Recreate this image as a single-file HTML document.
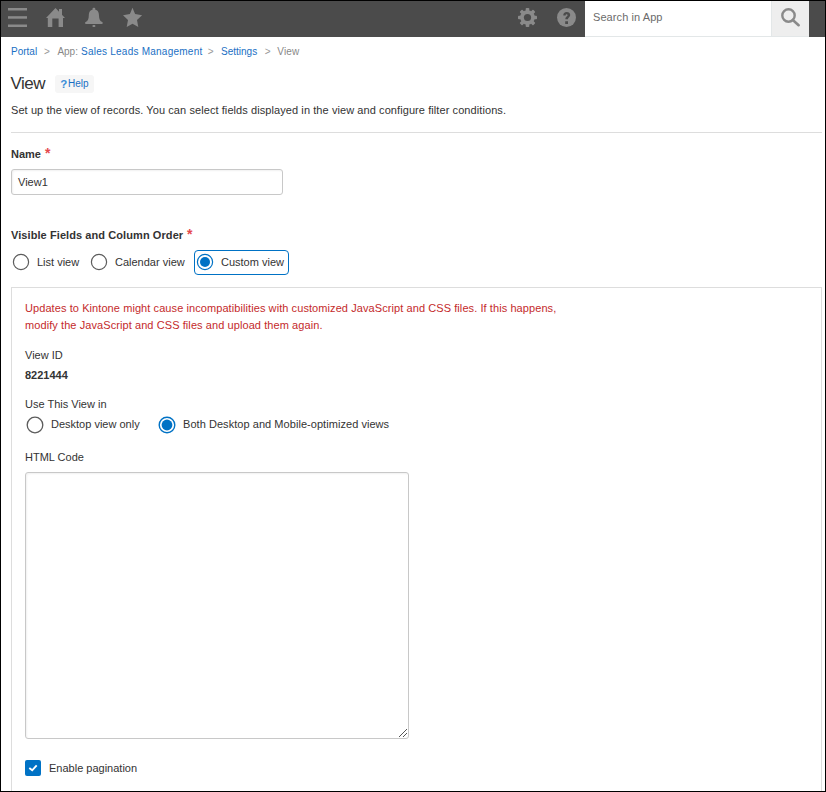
<!DOCTYPE html>
<html><head><meta charset="utf-8">
<style>
html,body{margin:0;padding:0;}
body{width:826px;height:792px;position:relative;overflow:hidden;background:#fff;font-family:"Liberation Sans",sans-serif;color:#333;}
.frame{position:absolute;left:0;top:0;width:826px;height:792px;box-sizing:border-box;border:1px solid #000;pointer-events:none;z-index:50;}
.a{position:absolute;white-space:nowrap;}
.hdr{position:absolute;left:0;top:0;width:826px;height:37px;background:#4b4b4b;}
.ic{position:absolute;}
.search{position:absolute;left:585px;top:0;width:186px;height:36px;background:#fff;border-bottom:1px solid #e3e7e8;}
.sbtn{position:absolute;left:771px;top:0;width:37px;height:36px;background:#eeeeee;border-bottom:1px solid #e3e7e8;border-left:1px solid #e3e7e8;}
.t11{font-size:11px;line-height:13px;}
.bc{font-size:10px;line-height:12px;color:#888;}
.bc .l{color:#1a6fc4;}
.req{color:#e5484d;}
.radio{position:absolute;width:17px;height:17px;box-sizing:border-box;border:1.3px solid #666;border-radius:50%;background:#fff;}
.radio.on{border-color:#0072c5;}
.radio.on:after{content:"";position:absolute;left:1.85px;top:1.85px;width:11px;height:11px;border-radius:50%;background:#0072c5;}
</style></head><body>
<div class="hdr"></div>
<!-- hamburger -->
<svg class="ic" style="left:8px;top:8px" width="19" height="19" viewBox="0 0 19 19"><g fill="#8a8a8a"><rect x="0" y="0" width="19" height="2.5"/><rect x="0" y="8.2" width="19" height="2.5"/><rect x="0" y="16.5" width="19" height="2.5"/></g></svg>
<!-- home -->
<svg class="ic" style="left:46px;top:8px" width="19" height="19" viewBox="0 0 19 19"><path fill="#8a8a8a" d="M9.5 0 L19 10 L17 10 L17 19 L12.6 19 L12.6 10.4 L6.3 10.4 L6.3 19 L1.8 19 L1.8 10 L0 10 Z M13 1 L16 1 L16 7 L13 7 Z"/></svg>
<!-- bell -->
<svg class="ic" style="left:84px;top:7px" width="20" height="21" viewBox="0 -1 20 21"><g fill="#8a8a8a"><rect x="8.50" y="-0.2" width="2.8" height="2.4" rx="1.1"/><path d="M9.90 1.5 C13.50 1.5 14.90 3.8 15.00 7.5 C15.10 11 15.70 12.6 18.10 14.1 C19.20 14.8 19.10 15.9 17.90 15.9 L1.90 15.9 C0.70 15.9 0.60 14.8 1.70 14.1 C4.10 12.6 4.70 11 4.80 7.5 C4.90 3.8 6.30 1.5 9.90 1.5 Z"/><rect x="8.40" y="17" width="3" height="2" rx="0.9"/></g></svg>
<!-- star -->
<svg class="ic" style="left:123px;top:7px" width="20" height="21" viewBox="0 -1 20 21"><path fill="#8a8a8a" d="M9.5 -0.2 L12.1 6.1 L19.1 7.2 L14 12 L15.3 19 L9.5 15.8 L3.7 19 L5 12 L-0.1 7.2 L6.9 6.1 Z"/></svg>
<!-- gear -->
<svg class="ic" style="left:518px;top:8px" width="19" height="19" viewBox="0 0 19 19"><g fill="#8a8a8a"><circle cx="9.5" cy="9.5" r="7.3"/><g><rect x="7.7" y="0" width="3.6" height="19" rx="0.8"/><rect x="0" y="7.7" width="19" height="3.6" rx="0.8"/><rect x="7.7" y="0" width="3.6" height="19" rx="0.8" transform="rotate(45 9.5 9.5)"/><rect x="7.7" y="0" width="3.6" height="19" rx="0.8" transform="rotate(-45 9.5 9.5)"/></g></g><circle cx="9.5" cy="9.5" r="3.6" fill="#4b4b4b"/></svg>
<!-- help -->
<svg class="ic" style="left:557px;top:8px" width="19" height="19" viewBox="0 0 19 19"><circle cx="9.5" cy="9.5" r="9.5" fill="#8a8a8a"/><path d="M6.3 7.6 C6.1 5.3 7.6 4 9.7 4 C11.8 4 13.2 5.3 13.2 7 C13.2 9.3 10.9 9.4 10.9 11.3 L8.4 11.3 C8.3 8.7 10.6 8.5 10.6 7.1 C10.6 6.5 10.2 6.2 9.6 6.2 C9 6.2 8.6 6.7 8.7 7.6 Z M8.2 13.3 L11 13.3 L11 15.9 L8.2 15.9 Z" fill="#4b4b4b"/></svg>
<div class="search"></div>
<div class="a" style="left:593px;top:11px;font-size:11px;line-height:13px;color:#6b6b6b;letter-spacing:0.08px">Search in App</div>
<div class="sbtn"></div>
<svg class="ic" style="left:780px;top:8px" width="21" height="19" viewBox="0 0 21 19"><circle cx="8.5" cy="7.5" r="6.2" fill="none" stroke="#8a8a8a" stroke-width="2.4"/><path d="M12.8 12 L18.6 17.2" stroke="#8a8a8a" stroke-width="2.6" stroke-linecap="round"/></svg>

<!-- breadcrumb -->
<div class="a bc" style="left:11px;top:45.6px"><span class="l">Portal</span></div>
<div class="a bc" style="left:44px;top:45.6px;color:#999">&gt;</div>
<div class="a bc" style="left:57.4px;top:45.6px">App:</div>
<div class="a bc l" style="left:81px;top:45.6px;color:#1a6fc4;letter-spacing:0.24px">Sales Leads Management</div>
<div class="a bc" style="left:207.8px;top:45.6px;color:#999">&gt;</div>
<div class="a bc" style="left:221px;top:45.6px;color:#1a6fc4">Settings</div>
<div class="a bc" style="left:264.7px;top:45.6px;color:#999">&gt;</div>
<div class="a bc" style="left:277.3px;top:45.6px;letter-spacing:0.15px">View</div>
<div class="a" style="left:10.5px;top:74px;font-size:17px;line-height:20px;color:#333;letter-spacing:-0.5px">View</div>
<div class="a" style="left:55px;top:75px;width:39px;height:18px;background:#f6f6f6;border-radius:3px"></div>
<div class="a" style="left:60.3px;top:78px;font-size:11.5px;line-height:12px;color:#3d8fd8;font-weight:bold">?</div><div class="a" style="left:68px;top:77.6px;font-size:10px;line-height:12px;color:#1a6fc4">Help</div>

<div class="a t11" style="left:11px;top:104px;letter-spacing:0.08px">Set up the view of records. You can select fields displayed in the view and configure filter conditions.</div>
<div class="a" style="left:11px;top:132px;width:811px;height:1px;background:#dddddd"></div>

<div class="a t11" style="left:11px;top:147.5px;font-weight:bold">Name</div><div class="a req" style="left:45px;top:146px;font-size:14px;line-height:14px;font-weight:bold">*</div>
<div class="a" style="left:11px;top:169px;width:272px;height:26px;box-sizing:border-box;border:1px solid #c8c8c8;border-radius:3px;box-shadow:inset 1px 1px 2px rgba(0,0,0,.06)"></div>
<div class="a t11" style="left:18px;top:176px">View1</div>

<div class="a t11" style="left:11px;top:229px;font-weight:bold;letter-spacing:0.08px">Visible Fields and Column Order</div><div class="a req" style="left:187px;top:227px;font-size:14px;line-height:14px;font-weight:bold">*</div>

<svg class="ic" style="left:10.5px;top:251.5px" width="20" height="20" viewBox="0 0 20 20"><circle cx="10" cy="10" r="7.6" fill="#fff" stroke="#5c5c5c" stroke-width="1.2"/></svg>
<div class="a t11" style="left:37px;top:256px">List view</div>
<svg class="ic" style="left:89px;top:251.5px" width="20" height="20" viewBox="0 0 20 20"><circle cx="10" cy="10" r="7.6" fill="#fff" stroke="#5c5c5c" stroke-width="1.2"/></svg>
<div class="a t11" style="left:115px;top:256px">Calendar view</div>
<div class="a" style="left:194px;top:250px;width:95px;height:25px;box-sizing:border-box;border:1px solid #0072c5;border-radius:4px"></div>
<svg class="ic" style="left:195px;top:251.5px" width="20" height="20" viewBox="0 0 20 20"><circle cx="10" cy="10" r="7.6" fill="#fff" stroke="#0072c5" stroke-width="1.2"/><circle cx="10" cy="10" r="5" fill="#0072c5"/></svg>
<div class="a t11" style="left:221px;top:256px">Custom view</div>

<!-- panel -->
<div class="a" style="left:11px;top:287px;width:811px;height:520px;box-sizing:border-box;border:1px solid #dddddd"></div>
<div class="a" style="left:25px;top:300px;font-size:11px;line-height:17px;color:#c42a2b;letter-spacing:0.08px">Updates to Kintone might cause incompatibilities with customized JavaScript and CSS files. If this happens,<br>modify the JavaScript and CSS files and upload them again.</div>
<div class="a t11" style="left:25px;top:349px">View ID</div>
<div class="a t11" style="left:25px;top:369px;font-weight:bold">8221444</div>
<div class="a t11" style="left:25px;top:398px">Use This View in</div>
<svg class="ic" style="left:24.5px;top:414.5px" width="20" height="20" viewBox="0 0 20 20"><circle cx="10" cy="10" r="7.8" fill="#fff" stroke="#5c5c5c" stroke-width="1.3"/></svg>
<div class="a t11" style="left:51px;top:418px">Desktop view only</div>
<svg class="ic" style="left:156.5px;top:414.5px" width="20" height="20" viewBox="0 0 20 20"><circle cx="10" cy="10" r="7.8" fill="#fff" stroke="#0072c5" stroke-width="1.4"/><circle cx="10" cy="10" r="5.4" fill="#0072c5"/></svg>
<div class="a t11" style="left:183px;top:418px;letter-spacing:0.05px">Both Desktop and Mobile-optimized views</div>
<div class="a t11" style="left:25px;top:451px">HTML Code</div>
<div class="a" style="left:25px;top:472px;width:384px;height:267px;box-sizing:border-box;border:1px solid #c8c8c8;border-radius:3px;box-shadow:inset 1px 1px 2px rgba(0,0,0,.06)"></div>
<svg class="ic" style="left:0;top:0" width="826" height="792" viewBox="0 0 826 792"><g fill="#555"><rect x="399" y="736" width="1" height="1"/><rect x="400" y="735" width="1" height="1"/><rect x="401" y="734" width="1" height="1"/><rect x="402" y="733" width="1" height="1"/><rect x="403" y="732" width="1" height="1"/><rect x="404" y="731" width="1" height="1"/><rect x="405" y="730" width="1" height="1"/><rect x="406" y="729" width="1" height="1"/><rect x="403" y="736" width="1" height="1"/><rect x="404" y="735" width="1" height="1"/><rect x="405" y="734" width="1" height="1"/><rect x="406" y="733" width="1" height="1"/></g></svg>
<div class="a" style="left:25px;top:760px;width:16px;height:16px;background:#0072c5;border-radius:2px"></div>
<svg class="ic" style="left:25px;top:760px" width="16" height="16" viewBox="0 0 16 16"><path d="M4.3 8 L7.2 10.3 L11.7 5.3" fill="none" stroke="#fff" stroke-width="1.9"/></svg>
<div class="a t11" style="left:49px;top:762px">Enable pagination</div>

<div class="frame"></div>
</body></html>
